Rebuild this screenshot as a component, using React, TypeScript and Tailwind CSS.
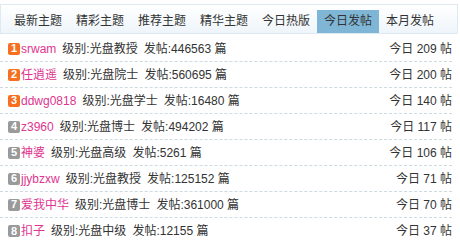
import React from "react";

interface Post {
  name: string;
  level: string;
  posts: number;
  today: number;
}

const tabs = ["最新主题", "精彩主题", "推荐主题", "精华主题", "今日热版", "今日发帖", "本月发帖"];

const rows: Post[] = [
  { name: "srwam", level: "光盘教授", posts: 446563, today: 209 },
  { name: "任逍遥", level: "光盘院士", posts: 560695, today: 200 },
  { name: "ddwg0818", level: "光盘学士", posts: 16480, today: 140 },
  { name: "z3960", level: "光盘博士", posts: 494202, today: 117 },
  { name: "神婆", level: "光盘高级", posts: 5261, today: 106 },
  { name: "jjybzxw", level: "光盘教授", posts: 125152, today: 71 },
  { name: "爱我中华", level: "光盘博士", posts: 361000, today: 70 },
  { name: "扣子", level: "光盘中级", posts: 12155, today: 37 },
];

const App = () => {
  return (
    <div
      className="w-[460px] h-[245px] bg-white text-[12px] text-[#333]"
      style={{ fontFamily: '"Liberation Sans", Arial, "Noto Sans CJK SC", sans-serif' }}
    >
      {/* Tab bar */}
      <div className="mt-[4px] w-[458px] h-[30px] flex items-end pl-[6px] border border-[#dfe9f1] bg-gradient-to-b from-white to-[#eef5fa]">
        {tabs.map((t) => (
          <div
            key={t}
            className={
              "w-[62px] h-[23px] leading-[23px] text-center whitespace-nowrap " +
              (t === "今日发帖" ? "bg-[#7fb6d6] text-[#333]" : "text-[#333]")
            }
          >
            {t}
          </div>
        ))}
      </div>

      {/* List */}
      <div className="w-[452px] mt-[2px]">
        {rows.map((r, i) => (
          <div
            key={r.name}
            className={
              "h-[26px] flex items-center pl-[8px] " +
              (i < rows.length - 1 ? "border-b border-dashed border-[#cddbe0]" : "")
            }
          >
            <span
              className={
                "w-[12px] h-[12px] rounded-[2px] flex items-center justify-center text-white text-[11px] font-bold leading-none " +
                (i < 3 ? "bg-[#f6701f]" : "bg-[#9a9a9a]")
              }
            >
              {i + 1}
            </span>
            <span className="ml-[1px] text-[#e0348f]">{r.name}</span>
            <span className="ml-[6px]">级别:{r.level}</span>
            <span className="ml-[6px]">发帖:{r.posts} 篇</span>
            <span className="ml-auto">今日 {r.today} 帖</span>
          </div>
        ))}
      </div>
    </div>
  );
};

export default App;
